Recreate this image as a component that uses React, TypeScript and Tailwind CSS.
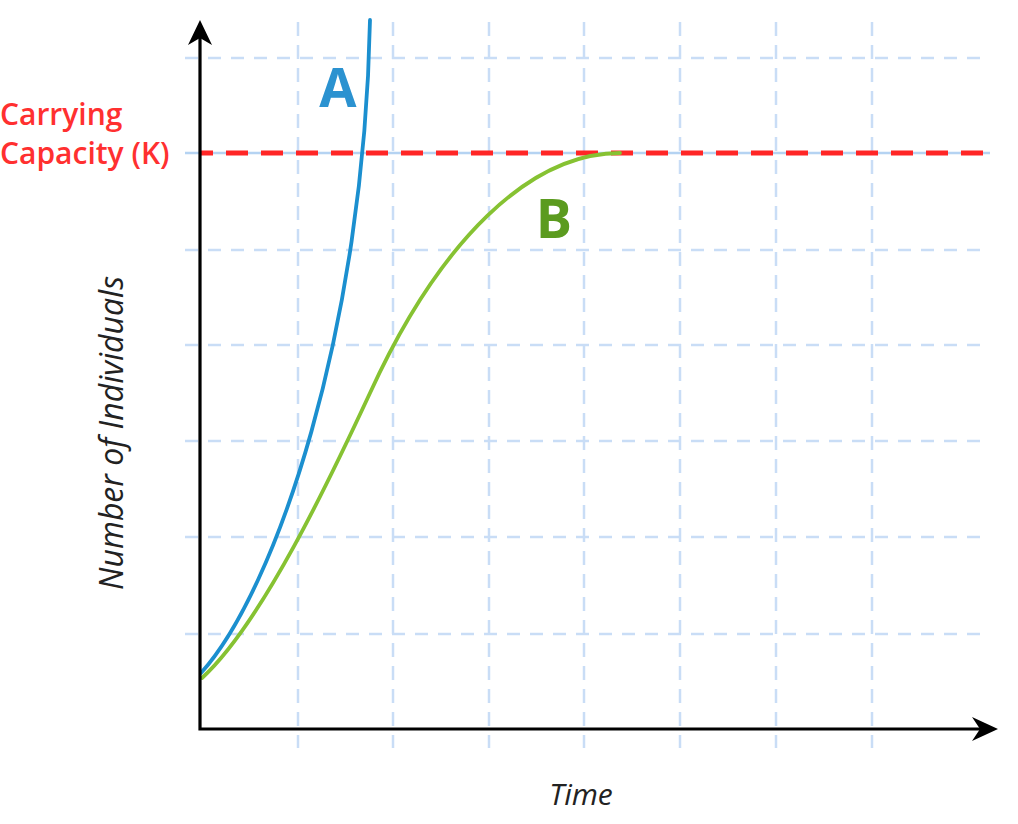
import React from "react";

const vx = [298, 393, 489, 584, 680, 776, 872];
const hy = [58, 250, 345, 441, 537, 634];

const bluePath = "M 201 673 C 276 590, 364 330, 370 20";
const greenPath =
  "M 202 678 C 262 623, 330 479, 370 393 C 440 240, 530 153, 620 153";

export default function App() {
  return (
    <div className="w-[1018px] h-[824px] bg-white overflow-hidden">
      <svg width="1018" height="824" viewBox="0 0 1018 824" className="block">
        {/* grid */}
        {vx.map((x) => (
          <line
            key={"v" + x}
            x1={x}
            y1={22}
            x2={x}
            y2={748}
            stroke="#c9ddf6"
            strokeWidth={2.5}
            strokeDasharray="14 9"
          />
        ))}
        {hy.map((y) => (
          <line
            key={"h" + y}
            x1={185}
            y1={y}
            x2={985}
            y2={y}
            stroke="#c9ddf6"
            strokeWidth={2.5}
            strokeDasharray="13 10"
          />
        ))}
        <line x1={185} y1={153} x2={990} y2={153} stroke="#b5d3f2" strokeWidth={2.5} />

        {/* carrying capacity */}
        <line
          x1={200}
          y1={153}
          x2={992}
          y2={153}
          stroke="#ff2626"
          strokeWidth={5}
          strokeDasharray="22 13"
          strokeDashoffset={9}
        />

        {/* curves */}
        <path d={greenPath} fill="none" stroke="#86c232" strokeWidth={3.8} strokeLinecap="round" />
        <path d={bluePath} fill="none" stroke="#1b8fcf" strokeWidth={3.8} strokeLinecap="round" />

        {/* axes */}
        <polyline points="200,36 200,729 984,729" fill="none" stroke="#000" strokeWidth={3.2} strokeLinejoin="miter" />
        <polygon points="200,20 212,45 200,38 188,45" fill="#000" />
        <polygon points="998,729 972,717 980,729 972,741" fill="#000" />

        {/* labels */}
        <g fontFamily="'Open Sans', 'Liberation Sans', sans-serif">
          <text x={0} y={125} fontSize={30} fontWeight={600} fill="#ff3030">
            Carrying
          </text>
          <text x={0} y={164} fontSize={30} fontWeight={600} fill="#ff3030">
            Capacity (K)
          </text>
          <text x={338} y={107} fontSize={54} fontWeight={700} fill="#2b92d0" textAnchor="middle">
            A
          </text>
          <text x={554} y={238} fontSize={54} fontWeight={700} fill="#5b9b1f" textAnchor="middle">
            B
          </text>
          <text x={581} y={805} fontSize={30} fontStyle="italic" fill="#222" textAnchor="middle">
            Time
          </text>
          <text
            x={0}
            y={0}
            fontSize={32}
            fontStyle="italic"
            fill="#222"
            textAnchor="middle"
            transform="translate(123 433) rotate(-90)"
          >
            Number of Individuals
          </text>
        </g>
      </svg>
    </div>
  );
}
